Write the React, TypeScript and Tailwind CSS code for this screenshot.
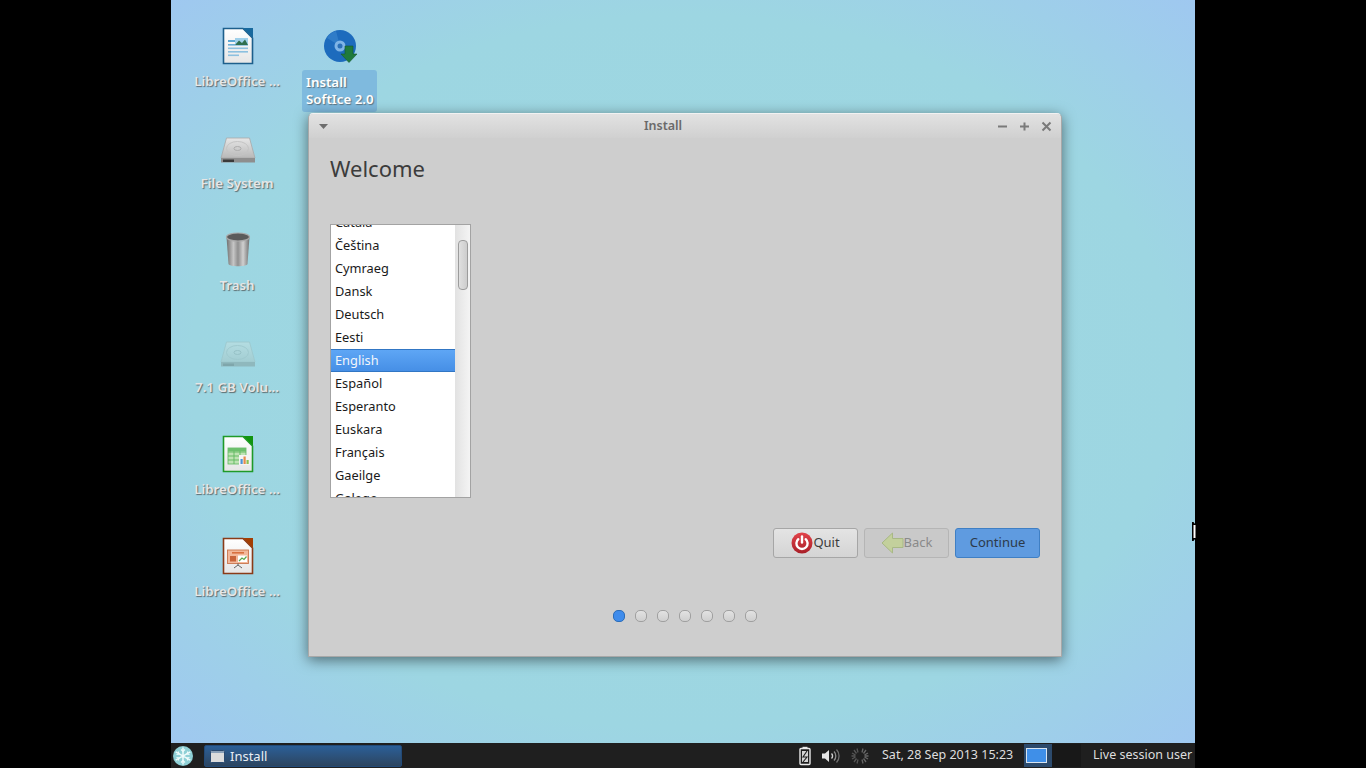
import React from 'react';

const font = "font-['Noto_Sans',sans-serif]";

const languages = ['Català', 'Čeština', 'Cymraeg', 'Dansk', 'Deutsch', 'Eesti', 'English', 'Español', 'Esperanto', 'Euskara', 'Français', 'Gaeilge', 'Galego'];

function DocIcon({ edge, corner, children }: { edge: string; corner: string; children: React.ReactNode }) {
  return (
    <svg width="32" height="38" viewBox="0 0 32 38">
      <defs>
        <linearGradient id={`page-${corner}`} x1="0" y1="0" x2="0" y2="1">
          <stop offset="0" stopColor="#ffffff" />
          <stop offset="1" stopColor="#e6e6e6" />
        </linearGradient>
      </defs>
      <path d="M1.5 1.5H21L30.5 11V36.5H1.5Z" fill={`url(#page-${corner})`} stroke={edge} strokeWidth="1.6" />
      <path d="M21 1H31V11Z" fill={corner} />
      {children}
    </svg>
  );
}

function WriterIcon() {
  return (
    <DocIcon edge="#1d5f8c" corner="#18699e">
      <rect x="6" y="13" width="8" height="2" fill="#5fa8d3" />
      <rect x="6" y="17" width="20" height="1.6" fill="#6aaed6" />
      <rect x="6" y="20.5" width="20" height="1.6" fill="#8cc0df" />
      <rect x="6" y="24" width="20" height="1.6" fill="#8cc0df" />
      <rect x="6" y="27.5" width="11" height="1.6" fill="#8cc0df" />
      <rect x="13" y="11" width="13" height="7" fill="#9fd0ea" />
      <path d="M13 18L17 13.5L20 16L23 12.5L26 18Z" fill="#2f6f4f" />
    </DocIcon>
  );
}

function CalcIcon() {
  return (
    <DocIcon edge="#1f9a28" corner="#12940f">
      <rect x="6" y="13" width="18" height="16" fill="#bfe3b4" stroke="#5fb85f" strokeWidth="0.8" />
      <path d="M6 17H24M6 21H24M6 25H24M12 13V29M18 13V29" stroke="#5fb85f" strokeWidth="0.9" />
      <rect x="6" y="13" width="18" height="3.4" fill="#6cbf6c" />
      <rect x="17" y="20" width="11" height="10" fill="#f4f4f4" />
      <rect x="18.5" y="24" width="2.2" height="5" fill="#4d94d6" />
      <rect x="21.5" y="21.5" width="2.2" height="7.5" fill="#e58b4b" />
      <rect x="24.5" y="25" width="2.2" height="4" fill="#8cc152" />
    </DocIcon>
  );
}

function ImpressIcon() {
  return (
    <DocIcon edge="#8a3b18" corner="#a33e03">
      <rect x="5.5" y="13" width="21" height="13.5" fill="#f3b89a" stroke="#c9764d" strokeWidth="0.9" />
      <rect x="10" y="15" width="12" height="1.6" fill="#d9703f" />
      <rect x="8" y="19" width="6" height="5.5" fill="#c9643a" />
      <rect x="16" y="18.5" width="9" height="6.5" fill="#ffffff" />
      <path d="M17 24L20 21L22 22.5L24.5 19.5" stroke="#5aa84f" strokeWidth="1.2" fill="none" />
      <path d="M16 26.5V28M16 28L12 31M16 28L20 31" stroke="#555" strokeWidth="0.9" fill="none" />
    </DocIcon>
  );
}

function DriveIcon({ faded }: { faded?: boolean }) {
  const id = faded ? 'drive-faded' : 'drive-solid';
  return (
    <svg width="36" height="28" viewBox="0 0 36 28" className="mt-[5px]">
      <defs>
        <linearGradient id={id} x1="0" y1="0" x2="0" y2="1">
          <stop offset="0" stopColor={faded ? '#b4dde2' : '#e6e6e6'} />
          <stop offset="1" stopColor={faded ? '#a2cdd2' : '#b8b8b8'} />
        </linearGradient>
      </defs>
      <path d="M6.5 1H29.5L35 21H1Z" fill={`url(#${id})`} stroke={faded ? '#9cc6cb' : '#a8a8a8'} strokeWidth="0.8" />
      <ellipse cx="17.5" cy="11.5" rx="11" ry="7" fill="none" stroke={faded ? '#9fcacf' : '#c4c4c4'} />
      <ellipse cx="17.5" cy="11.5" rx="3.5" ry="2" fill="none" stroke={faded ? '#97c2c7' : '#adadad'} />
      <path d="M1 21H35V25.5H1Z" fill={faded ? '#8fb8bd' : '#8e8e8e'} />
      <path d="M3 22.5H14V25H3Z" fill={faded ? '#7fa6ab' : '#3a3a3a'} />
    </svg>
  );
}

function TrashIcon() {
  return (
    <svg width="26" height="36" viewBox="0 0 26 36">
      <defs>
        <linearGradient id="trash-body" x1="0" y1="0" x2="1" y2="0">
          <stop offset="0" stopColor="#6f6f6f" />
          <stop offset="0.3" stopColor="#c6c6c6" />
          <stop offset="0.5" stopColor="#8f8f8f" />
          <stop offset="0.72" stopColor="#d0d0d0" />
          <stop offset="1" stopColor="#707070" />
        </linearGradient>
      </defs>
      <path d="M1.5 5L3.5 32C4 35 22 35 22.5 32L24.5 5Z" fill="url(#trash-body)" />
      <ellipse cx="13" cy="5" rx="11.5" ry="4" fill="#5b5b5b" stroke="#a9a9a9" strokeWidth="1.2" />
    </svg>
  );
}

function DiscIcon() {
  return (
    <svg width="36" height="36" viewBox="0 0 36 36">
      <circle cx="16" cy="16" r="16" fill="#1d6bbd" />
      <path d="M16 16L3 8A16 16 0 0 1 12 1Z" fill="#2f7cc8" />
      <circle cx="16" cy="16" r="5.5" fill="#7fb4e6" />
      <circle cx="16" cy="16" r="2.5" fill="#2a70b8" />
      <path d="M21 16H29V24H33L25 32.5L17 24H21Z" fill="#1f7a3c" stroke="#15592b" strokeWidth="0.6" />
    </svg>
  );
}

function DesktopIcon({ left, top, label, children }: { left: string; top: string; label: string; children: React.ReactNode }) {
  return (
    <div className={`absolute ${left} ${top} flex h-[84px] w-[92px] flex-col items-center`}>
      <div className="flex h-[44px] items-center justify-center">{children}</div>
      <span className="mt-[3px] -translate-x-[1px] whitespace-nowrap text-[13.3px] font-semibold leading-[20px] text-[#e6e6e6] [text-shadow:1px_1px_1px_rgba(70,70,70,0.75)]">{label}</span>
    </div>
  );
}

function PowerIcon() {
  return (
    <svg width="22" height="22" viewBox="0 0 22 22">
      <defs>
        <linearGradient id="power-fill" x1="0" y1="0" x2="0" y2="1">
          <stop offset="0" stopColor="#e2434a" />
          <stop offset="1" stopColor="#a81f28" />
        </linearGradient>
      </defs>
      <circle cx="11" cy="11" r="10.5" fill="url(#power-fill)" />
      <path d="M7.3 7.2A5.6 5.6 0 1 0 14.7 7.2" fill="none" stroke="#fff" strokeWidth="2.4" strokeLinecap="round" />
      <path d="M11 4.5V10.5" stroke="#fff" strokeWidth="2.4" strokeLinecap="round" />
    </svg>
  );
}

function BackIcon() {
  return (
    <svg width="23" height="22" viewBox="0 0 23 22">
      <path d="M1 11L11.5 1V6.5H22V15.5H11.5V21Z" fill="#c3d09c" stroke="#a8b885" strokeWidth="1" />
    </svg>
  );
}

function WindowButton({ children, disabled }: { children: React.ReactNode; disabled?: boolean }) {
  return (
    <button className={`flex h-[30px] w-[85px] items-center justify-center rounded-[3px] border text-[13px] ${disabled ? 'border-[#b5b5b5] bg-[#c9c9c9] text-[#8a8a8a]' : 'border-[#a6a6a6] bg-gradient-to-b from-[#e4e4e4] to-[#d4d4d4] text-[#3c3c3c]'}`}>
      {children}
    </button>
  );
}

function LanguageList() {
  return (
    <div className="flex h-[274px] w-[141px] overflow-hidden border border-[#a3a3a3] bg-white">
      <div className="h-full w-[124px] overflow-hidden">
        <div className="-mt-[14px]">
          {languages.map((name) => (
            <div key={name} className={`h-[23px] pl-[4px] text-[12.8px] ${name === 'English' ? 'border-y border-y-[#3176c4] bg-gradient-to-b from-[#5ea6f5] to-[#468fe6] leading-[21px] text-[#f2f6fb]' : 'leading-[23px] text-[#1a1a1a]'}`}>
              {name}
            </div>
          ))}
        </div>
      </div>
      <div className="h-full w-[15px] bg-gradient-to-r from-[#e2e2e2] to-[#f4f4f4] pl-[3px] pt-[15px]">
        <div className="h-[50px] w-[10px] rounded-[4px] border border-[#9c9c9c] bg-gradient-to-r from-[#e0e0e0] to-[#cdcdcd]" />
      </div>
    </div>
  );
}

function InstallWindow() {
  return (
    <div className="absolute left-[137px] top-[113px] flex h-[544px] w-[754px] flex-col overflow-hidden rounded-t-[5px] border border-[#a8a8a8] border-t-[#f2f2f2] bg-[#cecece] shadow-[0_3px_14px_rgba(0,0,0,0.5)]">
      <div className="flex h-[24px] shrink-0 items-center bg-gradient-to-b from-[#e2e2e2] to-[#d0d0d0] pl-[10px] pr-[9px]">
        <svg width="10" height="6" viewBox="0 0 10 6" className="mt-[1px]">
          <path d="M0 0H9L4.5 5Z" fill="#6d6d6d" />
        </svg>
        <span className="ml-[310px] w-[48px] text-center text-[12.5px] font-semibold text-[#6a6a6a]">Install</span>
        <div className="ml-auto flex items-center gap-[11px]">
          <svg width="11" height="11" viewBox="0 0 11 11"><path d="M1 5.5H10" stroke="#7a7a7a" strokeWidth="2" /></svg>
          <svg width="11" height="11" viewBox="0 0 11 11"><path d="M1 5.5H10M5.5 1.5V9.5" stroke="#7a7a7a" strokeWidth="2" /></svg>
          <svg width="11" height="11" viewBox="0 0 11 11"><path d="M1.5 1.5L9.5 9.5M9.5 1.5L1.5 9.5" stroke="#7a7a7a" strokeWidth="2" /></svg>
        </div>
      </div>
      <div className="flex flex-1 flex-col pl-[21px] pr-[21px]">
        <h1 className="mt-[13px] h-[34px] text-[22px] leading-[34px] text-[#3c3c3c]">Welcome</h1>
        <div className="mt-[39px]">
          <LanguageList />
        </div>
        <div className="mt-[30px] flex justify-end gap-[6px]">
          <WindowButton>
            <PowerIcon />
            <span>Quit</span>
          </WindowButton>
          <WindowButton disabled>
            <BackIcon />
            <span>Back</span>
          </WindowButton>
          <button className="h-[30px] w-[85px] rounded-[3px] border border-[#3f7fc4] bg-[#5f9be0] text-[13px] text-[#2c3a4a]">Continue</button>
        </div>
        <div className="ml-[283px] mt-[52px] flex gap-[10px]">
          <div className="h-[12px] w-[12px] rounded-[5px] border border-[#2c6db8] bg-[#3f8cec]" />
          {[0, 1, 2, 3, 4, 5].map((dot) => (
            <div key={dot} className="h-[12px] w-[12px] rounded-[5px] border-[1.5px] border-[#a0a0a0] bg-gradient-to-b from-[#e2e2e2] to-[#cfcfcf]" />
          ))}
        </div>
      </div>
    </div>
  );
}

function SnowflakeIcon() {
  return (
    <svg width="20" height="20" viewBox="0 0 20 20">
      <circle cx="10" cy="10" r="10" fill="#8fd0d6" />
      <path d="M10 1.5V18.5M2.7 5.8L17.3 14.2M17.3 5.8L2.7 14.2" stroke="#eefbfb" strokeWidth="1.5" />
      <path d="M8 3.5L10 5.5L12 3.5M8 16.5L10 14.5L12 16.5M3.5 8.5L6 8L5.2 5.5M16.5 8.5L14 8L14.8 5.5M3.5 11.5L6 12L5.2 14.5M16.5 11.5L14 12L14.8 14.5" stroke="#eefbfb" strokeWidth="1.1" fill="none" />
    </svg>
  );
}

function Panel() {
  return (
    <div className="flex h-[25px] items-center bg-[#1f1f1f] text-[12.5px] text-[#dedede]">
      <div className="ml-[2px] flex w-[20px] shrink-0 justify-center"><SnowflakeIcon /></div>
      <div className="ml-[11px] mt-[1px] flex h-[22px] w-[198px] shrink-0 items-center rounded-[2px] border border-[#224a78] bg-gradient-to-b from-[#2b5f98] to-[#2c4560] pl-[5px]">
        <svg width="15" height="13" viewBox="0 0 15 13">
          <rect x="0.5" y="0.5" width="14" height="12" rx="1" fill="#dcdcdc" stroke="#2a4a70" />
          <rect x="1" y="1" width="13" height="2" fill="#8aa0b8" />
        </svg>
        <span className="ml-[5px] mt-[1px] text-[13px] text-[#e8eef5]">Install</span>
      </div>
      <svg width="12" height="20" viewBox="0 0 12 20" className="ml-[397px] shrink-0">
        <rect x="3.5" y="0.8" width="5" height="2" fill="#e8e8e8" />
        <rect x="1" y="2.5" width="10" height="16" rx="1" fill="none" stroke="#e8e8e8" strokeWidth="1.4" />
        <path d="M3 5H9V16H3Z" fill="#d4d4d4" />
        <path d="M8 5L4 11H8L4 16" stroke="#1f1f1f" strokeWidth="1.1" fill="none" />
      </svg>
      <svg width="20" height="16" viewBox="0 0 20 16" className="ml-[10px] shrink-0">
        <path d="M1 5.5H4L8 2V14L4 10.5H1Z" fill="#e6e6e6" />
        <path d="M10.5 5.5A3.5 3.5 0 0 1 10.5 10.5" stroke="#cfcfcf" strokeWidth="1.4" fill="none" />
        <path d="M13 3.5A6.5 6.5 0 0 1 13 12.5" stroke="#8f8f8f" strokeWidth="1.3" fill="none" />
        <path d="M15.5 1.5A9.5 9.5 0 0 1 15.5 14.5" stroke="#6f6f6f" strokeWidth="1.3" fill="none" />
      </svg>
      <svg width="20" height="18" viewBox="0 0 20 18" className="ml-[9px] shrink-0">
        <path d="M7 1.5L8 5.5M4 3L6.5 6.5M2 6L5.5 8M1.5 9H5.5M2 12L5.5 10M4 15L6.5 11.5M7 16.5L8 12.5" stroke="#555" strokeWidth="1.3" />
        <path d="M13 1.5L12 5.5M16 3L13.5 6.5M18 6L14.5 8M18.5 9H14.5M18 12L14.5 10M16 15L13.5 11.5M13 16.5L12 12.5" stroke="#666" strokeWidth="1.3" />
      </svg>
      <span className="ml-[12px] w-[130px] shrink-0 whitespace-nowrap">Sat, 28 Sep 2013 15:23</span>
      <div className="ml-[12px] flex h-[23px] w-[28px] shrink-0 items-center justify-center bg-[#2c4a6c] pr-[3px]">
        <div className="h-[15px] w-[21px] border border-[#d8e4f0] bg-[#3f8fe8]" />
      </div>
      <div className="h-[23px] w-[29px] shrink-0 bg-[#181818]" />
      <span className="ml-[12px] shrink-0 whitespace-nowrap">Live session user</span>
    </div>
  );
}

export default function App() {
  return (
    <div className={`flex h-[768px] w-[1366px] justify-center overflow-hidden bg-black ${font}`}>
      <div className="relative flex h-full w-[1024px] flex-col">
        <div className="relative flex-1 bg-[radial-gradient(ellipse_at_center,#9fd8df_0%,#9dd6e2_68%,#9fc8f0_100%)]">
          <DesktopIcon left="left-[21px]" top="top-[24px]" label="LibreOffice ..."><WriterIcon /></DesktopIcon>
          <DesktopIcon left="left-[21px]" top="top-[126px]" label="File System"><DriveIcon /></DesktopIcon>
          <DesktopIcon left="left-[21px]" top="top-[228px]" label="Trash"><TrashIcon /></DesktopIcon>
          <DesktopIcon left="left-[21px]" top="top-[330px]" label="7.1 GB Volu..."><DriveIcon faded /></DesktopIcon>
          <DesktopIcon left="left-[21px]" top="top-[432px]" label="LibreOffice ..."><CalcIcon /></DesktopIcon>
          <DesktopIcon left="left-[21px]" top="top-[534px]" label="LibreOffice ..."><ImpressIcon /></DesktopIcon>

          <div className="absolute left-[131px] top-[24px] flex w-[75px] flex-col items-center">
            <div className="flex h-[44px] items-center pl-[4px] pt-[3px]"><DiscIcon /></div>
            <div className="mt-[2px] h-[42px] w-[75px] rounded-[3px] bg-[#7fbade] pl-[4px] pt-[4px] text-[13.3px] font-semibold leading-[17px] text-white [text-shadow:1px_1px_1px_rgba(70,70,70,0.6)]">
              Install<br />SoftIce 2.0
            </div>
          </div>

          <InstallWindow />
        </div>
        <Panel />
        <svg width="5" height="20" viewBox="0 0 5 20" className="absolute left-[1021px] top-[522px]">
          <path d="M0 0H1.5L3 2V17L1.5 19H0Z" fill="#000" />
          <path d="M1.5 3H3.5V16H1.5Z" fill="#fff" />
        </svg>
      </div>
    </div>
  );
}
